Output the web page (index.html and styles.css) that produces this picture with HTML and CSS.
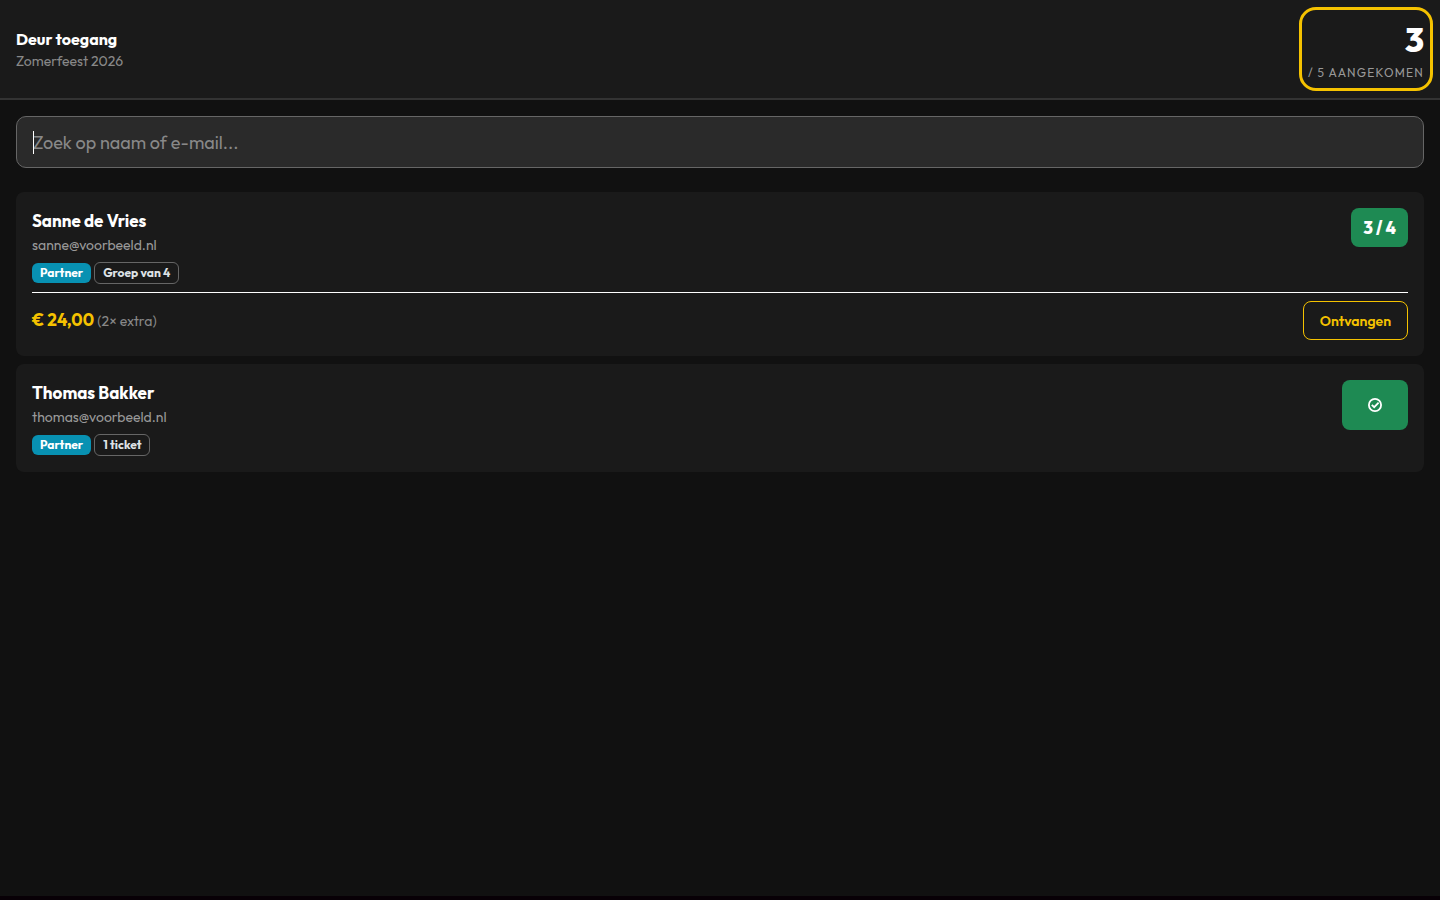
FILE: index.html
```html
<!DOCTYPE html>
<html lang="nl">
<head>
<meta charset="utf-8">
<meta name="viewport" content="width=device-width, initial-scale=1">
<title>Deur toegang</title>
<link rel="stylesheet" href="styles.css">
</head>
<body>

<div class="door">
  <header class="door-header">
    <div>
      <h1>Deur toegang</h1>
      <div class="event">Zomerfeest 2026</div>
    </div>
    <div class="counter">
      <div class="counter-num">3</div>
      <div class="counter-label">/ 5 aangekomen</div>
    </div>
  </header>

  <main>
    <div class="search-box">
      <input type="search" class="search" placeholder="Zoek op naam of e-mail..." aria-label="Zoek op naam of e-mail" autocomplete="off" autofocus>
    </div>

    <div class="guest">
      <div class="guest-top">
        <div>
          <h2>Sanne de Vries</h2>
          <div class="email">sanne@voorbeeld.nl</div>
          <div class="badges">
            <span class="badge badge-partner">Partner</span>
            <span class="badge">Groep van 4</span>
          </div>
        </div>
        <button type="button" class="checkin">3 / 4</button>
      </div>
      <div class="payment">
        <div><strong>€ 24,00</strong> <span class="extra">(2× extra)</span></div>
        <button type="button" class="receive">Ontvangen</button>
      </div>
    </div>

    <div class="guest">
      <div class="guest-top">
        <div>
          <h2>Thomas Bakker</h2>
          <div class="email">thomas@voorbeeld.nl</div>
          <div class="badges">
            <span class="badge badge-partner">Partner</span>
            <span class="badge">1 ticket</span>
          </div>
        </div>
        <button type="button" class="checkin checkin-done" aria-label="Aangekomen">
          <svg width="14" height="14" viewBox="0 0 14 14" fill="none" stroke="#fff" stroke-width="1.8">
            <circle cx="7" cy="7" r="6.1"/>
            <path d="M3.8 6.8l2.4 2.4L10.6 4.6"/>
          </svg>
        </button>
      </div>
    </div>
  </main>
</div>

</body>
</html>
```

FILE: styles.css
```css
* {
  box-sizing: border-box;
}
html {
  background: #080006;
}
body {
  margin: 0;
  color: #fff;
  font-family: Outfit, Lato, sans-serif;
  font-size: 16px;
  line-height: 24px;
}
h1, h2 {
  margin: 0;
  font-weight: 700;
}
button, input {
  font-family: inherit;
}
.door {
  min-height: calc(100vh - 4px);
  background: #111;
}

/* header */
.door-header {
  display: flex;
  justify-content: space-between;
  align-items: center;
  padding: 16px;
  background: #1a1a1a;
  border-bottom: 2px solid #333;
}
h1 {
  font-size: 16px;
  line-height: 24px;
}
.event {
  color: #888;
  font-size: 14px;
  line-height: 20px;
}
.counter {
  text-align: right;
  border-radius: 8px;
  outline: 3px solid #f5c200;
  outline-offset: 6px;
}
.counter-num {
  font-size: 34px;
  font-weight: 800;
  line-height: 48px;
}
.counter-label {
  color: #999;
  font-size: 12px;
  line-height: 18px;
  letter-spacing: 0.1em;
  text-transform: uppercase;
}

/* search */
main {
  padding: 16px;
}
.search-box {
  position: relative;
  margin-bottom: 24px;
}
.search {
  display: block;
  width: 100%;
  height: 52px;
  padding: 0 16px;
  color: #fff;
  background: #2a2a2a;
  border: 1px solid #666;
  border-radius: 10px;
  font-size: 18px;
  outline: none;
  appearance: none;
  caret-color: transparent;
}
.search::placeholder {
  color: #888;
}
/* steady caret */
.search-box::before {
  content: "";
  position: absolute;
  top: 15px;
  left: 17px;
  width: 1px;
  height: 23px;
  background: #fff;
}

/* guests */
.guest {
  margin-bottom: 8px;
  padding: 16px;
  background: #1a1a1a;
  border-radius: 8px;
}
.guest-top {
  display: flex;
  justify-content: space-between;
  align-items: flex-start;
}
h2 {
  font-size: 17px;
  line-height: 26px;
}
.email {
  color: #999;
  font-size: 14px;
  line-height: 22px;
}
.badges {
  display: flex;
  align-items: center;
  gap: 3px;
  margin-top: 6px;
}
.badge {
  padding: 0 8px;
  color: #dee2e6;
  border: 1px solid #666;
  border-radius: 6px;
  font-size: 12px;
  font-weight: 700;
  line-height: 20px;
}
.badge-partner {
  color: #fff;
  background: #0891b2;
  border: 0;
}
.checkin {
  height: 39px;
  padding: 0 12px;
  color: #fff;
  background: #1e8a53;
  border: 0;
  border-radius: 8px;
  font-size: 17px;
  font-weight: 800;
}
.checkin-done {
  display: flex;
  align-items: center;
  justify-content: center;
  width: 66px;
  height: 50px;
}
.payment {
  display: flex;
  justify-content: space-between;
  align-items: center;
  margin-top: 8px;
  padding-top: 8px;
  border-top: 1px solid #fff;
}
.payment strong {
  color: #f5c200;
  font-size: 17px;
}
.extra {
  color: #888;
  font-size: 14px;
}
.receive {
  height: 39px;
  padding: 0 16px;
  color: #f5c200;
  background: none;
  border: 1px solid #f5c200;
  border-radius: 8px;
  font-size: 14px;
  font-weight: 600;
}
```
